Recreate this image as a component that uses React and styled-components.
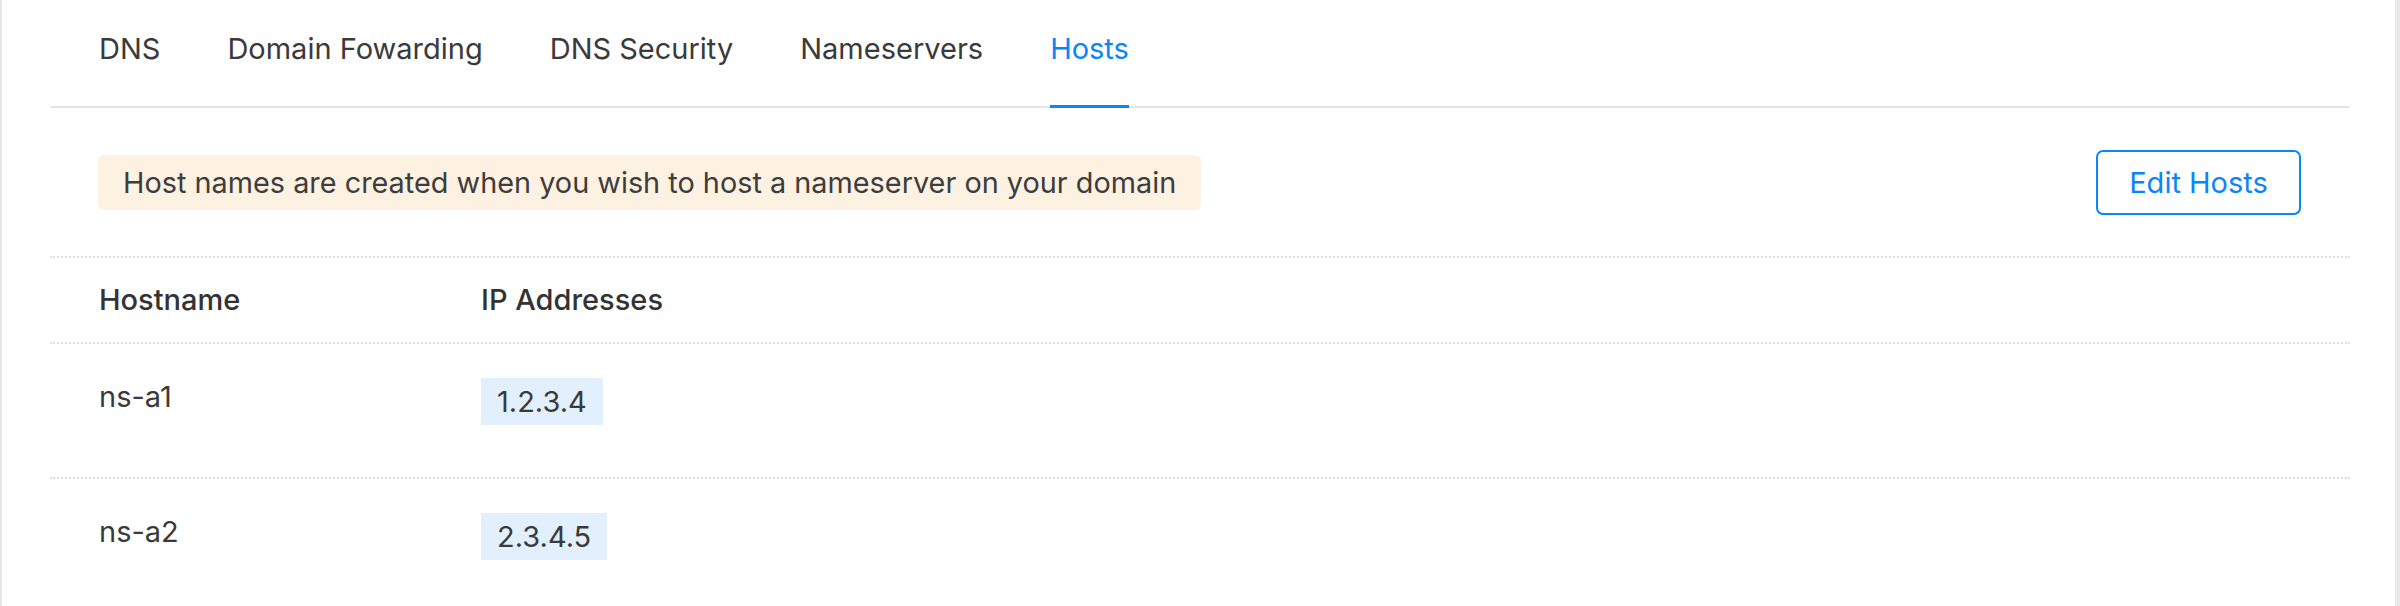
import React from "react";
import styled, { createGlobalStyle } from "styled-components";

const GlobalStyle = createGlobalStyle`
  html, body {
    margin: 0;
    padding: 0;
    background: #fff;
  }
  body {
    font-family: Inter, "Open Sans", "Liberation Sans", sans-serif;
    color: #3a3a3a;
    -webkit-font-smoothing: antialiased;
  }
`;

const Frame = styled.div`
  box-sizing: border-box;
  width: 2400px;
  height: 606px;
  overflow: hidden;
  border-left: 2px solid #e6e6e6;
  border-right: 5px solid #e8e8e8;
  padding: 0 45px 0 48px;
`;

const TabBar = styled.nav`
  display: flex;
  gap: 67px;
  height: 106px;
  padding-left: 49px;
  border-bottom: 2px solid #e5e5e5;
`;

const Tab = styled.div`
  box-sizing: border-box;
  height: 108px;
  margin-bottom: -2px;
  padding-top: 31px;
  font-size: 29px;
  line-height: 36px;
  white-space: nowrap;
  color: ${(p) => (p.$active ? "#0b86f6" : "#3a3a3a")};
  border-bottom: 3px solid ${(p) => (p.$active ? "#0b86f6" : "transparent")};
  cursor: pointer;
`;

const InfoRow = styled.div`
  display: flex;
  align-items: center;
  justify-content: space-between;
  height: 148px;
  padding: 0 49px 0 48px;
  border-bottom: 2px dotted #dedede;
`;

const Notice = styled.div`
  height: 55px;
  line-height: 55px;
  padding: 0 25px;
  border-radius: 6px;
  background: #fdf1e2;
  font-size: 28.85px;
  color: #3d3d3d;
  white-space: nowrap;
`;

const OutlineBtn = styled.button`
  box-sizing: border-box;
  width: 205px;
  height: 65px;
  border: 2px solid #0b86f6;
  border-radius: 7px;
  background: #fff;
  color: #0b86f6;
  font-family: inherit;
  font-size: 29px;
  cursor: pointer;
`;

const Row = styled.div`
  display: grid;
  grid-template-columns: 382px 1fr;
  box-sizing: border-box;
  height: ${(p) => (p.$head ? "86px" : "135px")};
  padding: ${(p) => (p.$head ? "0 0 0 49px" : "34px 0 0 49px")};
  align-items: ${(p) => (p.$head ? "center" : "start")};
  border-bottom: 2px dotted #dedede;
`;

const HeadCell = styled.div`
  font-size: 29px;
  font-weight: 500;
  color: #333;
  line-height: 36px;
`;

const Cell = styled.div`
  font-size: 29px;
  line-height: 38px;
  color: #3a3a3a;
`;

const IpChip = styled.span`
  display: inline-block;
  height: 47px;
  line-height: 47px;
  padding: 0 16px;
  background: #e2f0fd;
  font-size: 29px;
  color: #3a3a3a;
`;

const tabs = ["DNS", "Domain Fowarding", "DNS Security", "Nameservers", "Hosts"];

const hosts = [
  { name: "ns-a1", ip: "1.2.3.4" },
  { name: "ns-a2", ip: "2.3.4.5" },
];

export default function App() {
  return (
    <>
      <GlobalStyle />
      <Frame>
        <TabBar>
          {tabs.map((t) => (
            <Tab key={t} $active={t === "Hosts"}>
              {t}
            </Tab>
          ))}
        </TabBar>
        <InfoRow>
          <Notice>Host names are created when you wish to host a nameserver on your domain</Notice>
          <OutlineBtn type="button">Edit Hosts</OutlineBtn>
        </InfoRow>
        <Row $head>
          <HeadCell>Hostname</HeadCell>
          <HeadCell>IP Addresses</HeadCell>
        </Row>
        {hosts.map((h) => (
          <Row key={h.name}>
            <Cell>{h.name}</Cell>
            <div>
              <IpChip>{h.ip}</IpChip>
            </div>
          </Row>
        ))}
      </Frame>
    </>
  );
}
